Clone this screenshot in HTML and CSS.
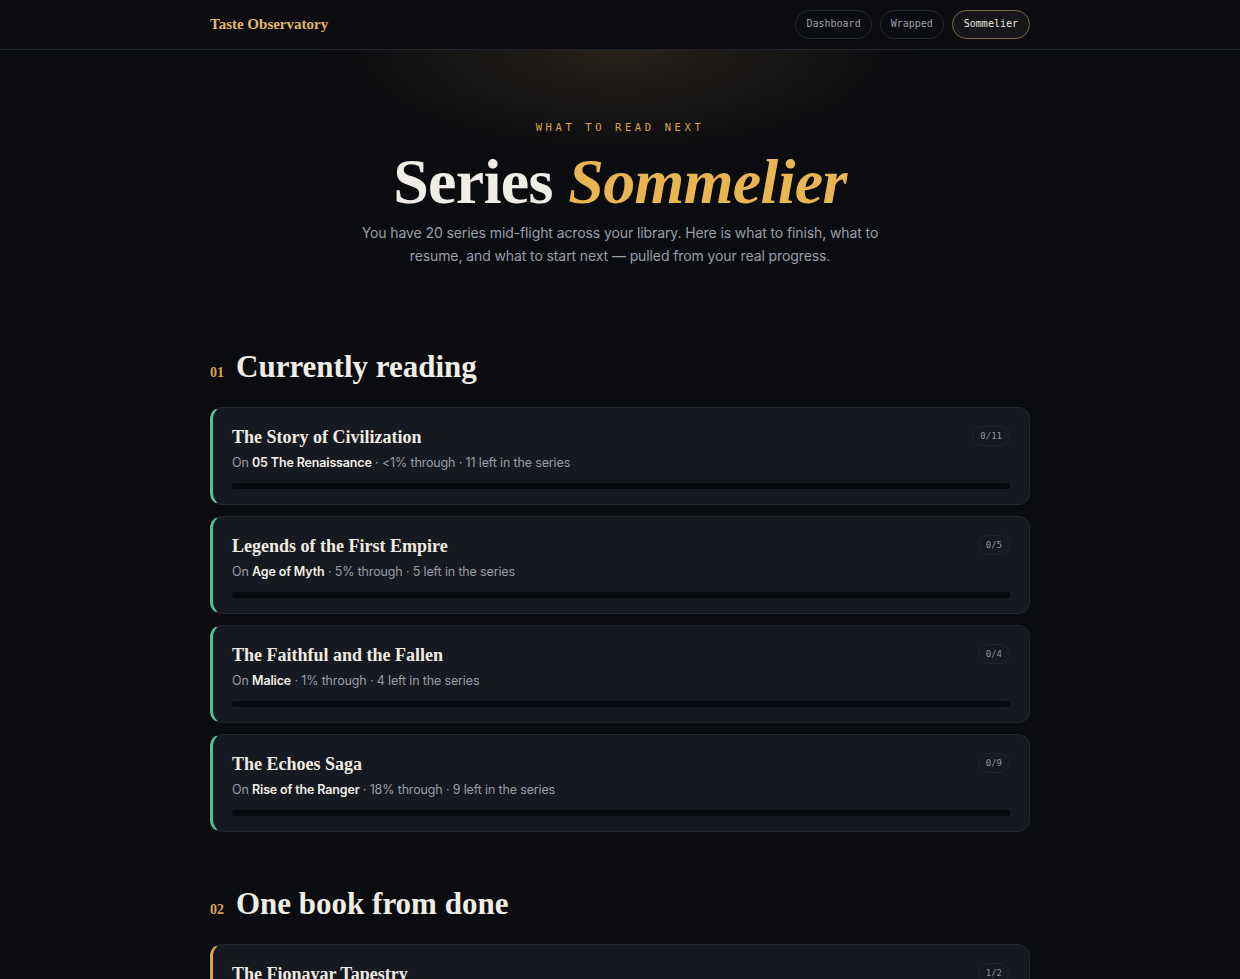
FILE: index.html
```html
<!DOCTYPE html>
<html lang="en">
<head>
<meta charset="UTF-8" />
<meta name="viewport" content="width=device-width, initial-scale=1.0"/>
<title>Series Sommelier · Taste Observatory</title>
<link rel="stylesheet" href="styles.css">
</head>
<body>
<header class="topbar">
  <div class="wrap topbar-inner">
    <a class="brand" href="#">Taste Observatory</a>
    <nav class="nav">
      <a class="pill" href="#">Dashboard</a>
      <a class="pill" href="#">Wrapped</a>
      <a class="pill active" href="#">Sommelier</a>
    </nav>
  </div>
</header>

<section class="hero">
  <div class="eyebrow">What to read next</div>
  <h1>Series <em>Sommelier</em></h1>
  <p class="lede">You have 20 series mid-flight across your library. Here is what to finish, what to resume, and what to start next — pulled from your real progress.</p>
</section>

<main class="wrap">
  <section class="group">
    <h2 class="group-title"><span class="num">01</span>Currently reading</h2>
    <div class="cards">
      <article class="card reading">
        <div class="card-head">
          <h3>The Story of Civilization</h3>
          <span class="count">0/11</span>
        </div>
        <p class="meta">On <b>05 The Renaissance</b> · &lt;1% through · 11 left in the series</p>
        <div class="bar"><span style="width:0%"></span></div>
      </article>
      <article class="card reading">
        <div class="card-head">
          <h3>Legends of the First Empire</h3>
          <span class="count">0/5</span>
        </div>
        <p class="meta">On <b>Age of Myth</b> · 5% through · 5 left in the series</p>
        <div class="bar"><span style="width:0%"></span></div>
      </article>
      <article class="card reading">
        <div class="card-head">
          <h3>The Faithful and the Fallen</h3>
          <span class="count">0/4</span>
        </div>
        <p class="meta">On <b>Malice</b> · 1% through · 4 left in the series</p>
        <div class="bar"><span style="width:0%"></span></div>
      </article>
      <article class="card reading">
        <div class="card-head">
          <h3>The Echoes Saga</h3>
          <span class="count">0/9</span>
        </div>
        <p class="meta">On <b>Rise of the Ranger</b> · 18% through · 9 left in the series</p>
        <div class="bar"><span style="width:0%"></span></div>
      </article>
    </div>
  </section>

  <section class="group">
    <h2 class="group-title"><span class="num">02</span>One book from done</h2>
    <div class="cards">
      <article class="card almost">
        <div class="card-head">
          <h3>The Fionavar Tapestry</h3>
          <span class="count">1/2</span>
        </div>
        <p class="meta">Next up <b>The Darkest Road</b> · 1 left in the series</p>
        <div class="bar"><span style="width:50%"></span></div>
      </article>
    </div>
  </section>
</main>
</body>
</html>
```

FILE: styles.css
```css
body {
  margin: 0;
  background: #0b0c10;
  color: #e9e6df;
  font-family: Inter, 'Noto Sans', sans-serif;
}
a {
  text-decoration: none;
  color: inherit;
}
.wrap {
  width: 820px;
  margin: 0 auto;
}

/* top bar */
.topbar {
  border-bottom: 1px solid #23252c;
}
.topbar-inner {
  height: 49px;
  display: flex;
  align-items: center;
  justify-content: space-between;
}
.brand {
  font-family: 'Liberation Serif', serif;
  font-weight: bold;
  font-size: 15px;
  color: #e3b766;
}
.nav {
  display: flex;
  gap: 8px;
}
.pill {
  font-family: 'DejaVu Sans Mono', monospace;
  font-size: 10px;
  line-height: 14px;
  color: #9b9ea6;
  padding: 6px 10px 7px;
  border: 1px solid #26282f;
  border-radius: 999px;
}
.pill.active {
  color: #ece8df;
  border-color: #7d6a45;
  background: #15151a;
  padding: 6px 11px 7px;
}

/* hero */
.hero {
  text-align: center;
  padding: 71px 0 82px;
  background: radial-gradient(ellipse 300px 110px at 50% 0, rgba(226, 179, 94, 0.12), rgba(226, 179, 94, 0) 100%);
}
.eyebrow {
  font-family: 'DejaVu Sans Mono', monospace;
  font-size: 10.5px;
  letter-spacing: 3.6px;
  text-transform: uppercase;
  color: #d8a54c;
}
.hero h1 {
  font-family: 'Liberation Serif', serif;
  font-weight: bold;
  font-size: 64px;
  line-height: 1;
  margin: 17px 0 7px;
  color: #f0ede6;
  letter-spacing: -0.01em;
}
.hero h1 em {
  color: #e8b552;
}
.lede {
  width: 540px;
  margin: 0 auto;
  font-size: 14px;
  letter-spacing: -0.1px;
  line-height: 23px;
  color: #9a9ea8;
}

/* groups */
.group {
  margin-bottom: 54px;
}
.group-title {
  font-family: 'Liberation Serif', serif;
  font-weight: bold;
  font-size: 31px;
  margin: 0 0 22px;
  color: #f0ede6;
  display: flex;
  align-items: baseline;
  gap: 12px;
}
.num {
  font-size: 14px;
  color: #d8a54c;
}
.cards {
  display: flex;
  flex-direction: column;
  gap: 11px;
}
.card {
  background: #171920;
  border: 1px solid #24262e;
  border-left: 3px solid #5bbf8c;
  border-radius: 12px;
  padding: 19px 19px 15px 19px;
}
.card.almost {
  border-left-color: #d9a54e;
}
.card-head {
  display: flex;
  justify-content: space-between;
  align-items: center;
}
.card h3 {
  font-family: 'Liberation Serif', serif;
  font-weight: bold;
  font-size: 18px;
  line-height: 21px;
  margin: 0;
  color: #efebe3;
}
.count {
  font-family: 'DejaVu Sans Mono', monospace;
  font-size: 9px;
  line-height: 12px;
  color: #8f929b;
  padding: 3px 7px;
  margin-top: -4px;
  border: 1px solid #22242b;
  border-radius: 999px;
}
.meta {
  margin: 7px 0 12px;
  font-size: 12.5px;
  line-height: 16px;
  letter-spacing: -0.15px;
  color: #9a9ca5;
}
.meta b {
  color: #f2efe8;
  font-weight: 600;
}
.bar {
  height: 6px;
  border-radius: 3px;
  background: #08090c;
  overflow: hidden;
}
.bar span {
  display: block;
  height: 100%;
  background: #5bbf8c;
}
.almost .bar span {
  background: #d9a54e;
}
```
